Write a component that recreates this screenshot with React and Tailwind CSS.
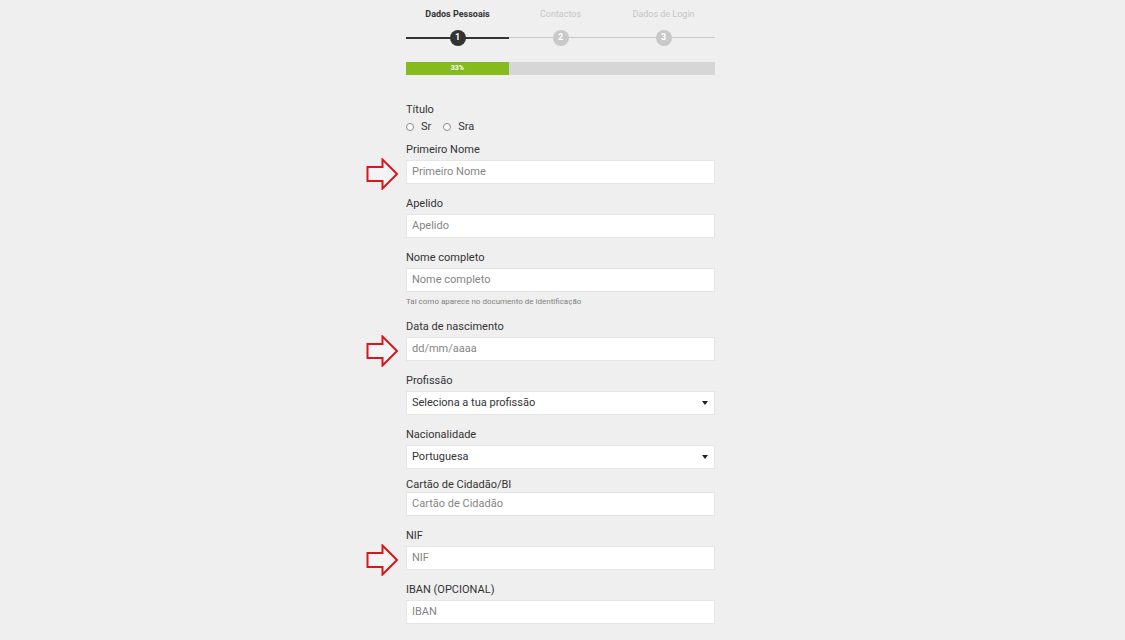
import React from 'react';

const steps = [
  { n: 1, label: 'Dados Pessoais', active: true },
  { n: 2, label: 'Contactos', active: false },
  { n: 3, label: 'Dados de Login', active: false },
];

function Arrow() {
  return (
    <svg
      className="absolute left-[-40px] top-[-2px]"
      width="33"
      height="32"
      viewBox="0 0 33 32"
      fill="none"
    >
      <path
        d="M1.5 9 H16.5 V1.5 L31 16 L16.5 30.5 V23 H1.5 Z"
        stroke="#d7161e"
        strokeWidth="2"
        strokeLinejoin="miter"
        fill="#f4f4f4"
      />
    </svg>
  );
}

function TextInput({ placeholder, arrow }) {
  return (
    <div className="relative">
      {arrow && <Arrow />}
      <div className="h-[24px] bg-white border border-[#e6e6e6] flex items-center pl-[5px] text-[11px] text-[#858585]">
        {placeholder}
      </div>
    </div>
  );
}

function SelectInput({ value }) {
  return (
    <div className="h-[24px] bg-white border border-[#e6e6e6] flex items-center justify-between pl-[5px] pr-[6px] text-[11px] text-[#333]">
      <span>{value}</span>
      <svg width="6" height="4" viewBox="0 0 6 4">
        <path d="M0 0 H6 L3 4 Z" fill="#222" />
      </svg>
    </div>
  );
}

function Label({ children, className = '' }) {
  return <div className={`h-[14px] leading-[14px] text-[11px] text-[#333] ${className}`}>{children}</div>;
}

function Field({ label, placeholder, arrow, className = 'mt-[13px]' }) {
  return (
    <div className={className}>
      <Label>{label}</Label>
      <div className="mt-[3px]">
        <TextInput placeholder={placeholder} arrow={arrow} />
      </div>
    </div>
  );
}

function Radio({ label }) {
  return (
    <div className="flex items-center gap-[7px]">
      <span className="w-[8px] h-[8px] rounded-full border border-[#8a8a8a] bg-white" />
      <span className="text-[11px] text-[#333]">{label}</span>
    </div>
  );
}

export default function App() {
  return (
    <div className="min-h-screen bg-[#efefef] font-['Roboto',sans-serif]">
      <div className="ml-[406px] w-[309px] pt-[9px] pb-[20px]">
        {/* stepper */}
        <div className="grid grid-cols-3">
          {steps.map((s) => (
            <div key={s.n} className="flex flex-col items-center">
              <div
                className={`h-[11px] leading-[11px] text-[9px] text-center ${
                  s.active ? 'font-bold text-[#333]' : 'text-[#c6c6c6]'
                }`}
              >
                {s.label}
              </div>
              <div className="relative w-full h-[16px] mt-[10px] flex items-center justify-center">
                <div
                  className={`absolute left-0 right-0 top-[7px] ${
                    s.active ? 'bg-[#333] h-[1.5px]' : 'bg-[#c9c9c9] h-[1px]'
                  }`}
                />
                <div
                  className={`relative w-[16px] h-[16px] rounded-full flex items-center justify-center text-[9px] font-bold text-white ${
                    s.active ? 'bg-[#333]' : 'bg-[#c9c9c9]'
                  }`}
                >
                  {s.n}
                </div>
              </div>
            </div>
          ))}
        </div>

        {/* progress */}
        <div className="mt-[16px] h-[13px] bg-[#d6d6d6] flex">
          <div className="w-[33.3%] h-full bg-[#85bb1c] flex items-center justify-center text-[7px] font-bold text-white">
            33%
          </div>
        </div>

        {/* form */}
        <div className="mt-[28px]">
          <Label>Título</Label>
          <div className="mt-[3px] h-[14px] flex items-center gap-[12px]">
            <Radio label="Sr" />
            <Radio label="Sra" />
          </div>

          <Field label="Primeiro Nome" placeholder="Primeiro Nome" arrow className="mt-[9px]" />
          <Field label="Apelido" placeholder="Apelido" />
          <div className="mt-[13px]">
            <Label>Nome completo</Label>
            <div className="mt-[3px]">
              <TextInput placeholder="Nome completo" />
            </div>
            <div className="mt-[5px] h-[10px] leading-[10px] text-[8px] text-[#808080]">
              Tal como aparece no documento de identificação
            </div>
          </div>
          <Field label="Data de nascimento" placeholder="dd/mm/aaaa" arrow className="mt-[13px]" />

          <div className="mt-[13px]">
            <Label>Profissão</Label>
            <div className="mt-[3px]">
              <SelectInput value="Seleciona a tua profissão" />
            </div>
          </div>
          <div className="mt-[13px]">
            <Label>Nacionalidade</Label>
            <div className="mt-[3px]">
              <SelectInput value="Portuguesa" />
            </div>
          </div>
          <div className="mt-[9px]">
            <Label>Cartão de Cidadão/BI</Label>
            <div className="mt-0">
              <TextInput placeholder="Cartão de Cidadão" />
            </div>
          </div>
          <Field label="NIF" placeholder="NIF" arrow />
          <Field label="IBAN (OPCIONAL)" placeholder="IBAN" />
        </div>
      </div>
    </div>
  );
}
